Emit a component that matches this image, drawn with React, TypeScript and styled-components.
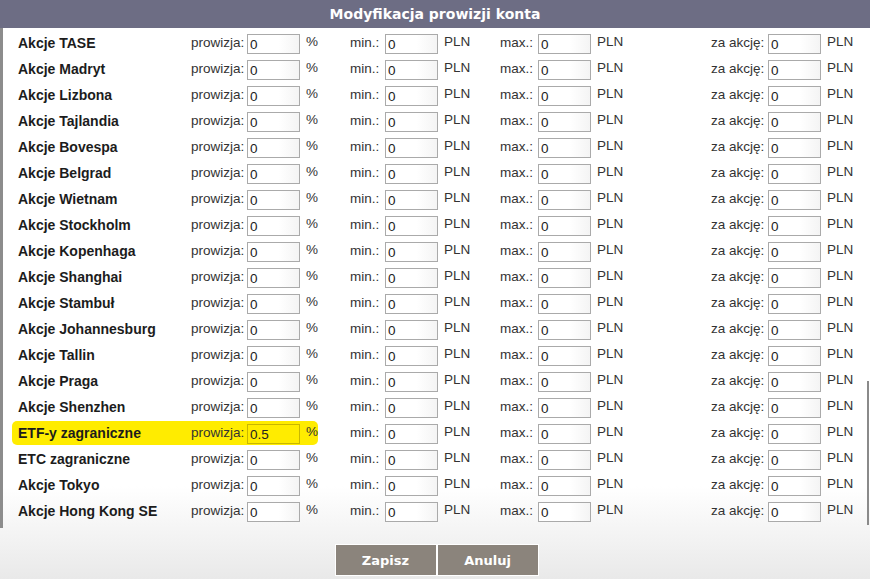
import * as React from 'react';
import styled, { createGlobalStyle } from 'styled-components';

type Entry = {
  name: string,
  rate: string,
  highlighted?: boolean,
};

const ENTRIES: Entry[] = [
  { name: 'Akcje TASE', rate: '0' },
  { name: 'Akcje Madryt', rate: '0' },
  { name: 'Akcje Lizbona', rate: '0' },
  { name: 'Akcje Tajlandia', rate: '0' },
  { name: 'Akcje Bovespa', rate: '0' },
  { name: 'Akcje Belgrad', rate: '0' },
  { name: 'Akcje Wietnam', rate: '0' },
  { name: 'Akcje Stockholm', rate: '0' },
  { name: 'Akcje Kopenhaga', rate: '0' },
  { name: 'Akcje Shanghai', rate: '0' },
  { name: 'Akcje Stambuł', rate: '0' },
  { name: 'Akcje Johannesburg', rate: '0' },
  { name: 'Akcje Tallin', rate: '0' },
  { name: 'Akcje Praga', rate: '0' },
  { name: 'Akcje Shenzhen', rate: '0' },
  { name: 'ETF-y zagraniczne', rate: '0.5', highlighted: true },
  { name: 'ETC zagraniczne', rate: '0' },
  { name: 'Akcje Tokyo', rate: '0' },
  { name: 'Akcje Hong Kong SE', rate: '0' },
];

const ROW_HEIGHT = 26;

const App: React.FC = () => (
  <>
    <GlobalStyle />
    <Dialog>
      <Header>Modyfikacja prowizji konta</Header>
      <Body>
        <List>
          {ENTRIES.map((entry) => (
            <Row key={entry.name}>
              <Highlight active={!!entry.highlighted}>
                <Name>{entry.name}</Name>
                <Caption w={56}>prowizja:</Caption>
                <Field active={!!entry.highlighted} defaultValue={entry.rate} />
                <Unit>%</Unit>
              </Highlight>
              <Group w={150}>
                <Caption w={35}>min.:</Caption>
                <Field active={false} defaultValue="0" />
                <Unit>PLN</Unit>
              </Group>
              <Group w={211}>
                <Caption w={38}>max.:</Caption>
                <Field active={false} defaultValue="0" />
                <Unit>PLN</Unit>
              </Group>
              <Group w={150}>
                <Caption w={57}>za akcję:</Caption>
                <Field active={false} defaultValue="0" />
                <Unit>PLN</Unit>
              </Group>
            </Row>
          ))}
        </List>
        <ScrollThumb />
      </Body>
      <Footer>
        <Button>Zapisz</Button>
        <Button>Anuluj</Button>
      </Footer>
    </Dialog>
  </>
);

const GlobalStyle = createGlobalStyle`
  html, body {
    margin: 0;
    padding: 0;
    overflow: hidden;
  }
  body {
    font-family: "Liberation Sans", Arial, sans-serif;
  }
`;

const Dialog = styled.div`
  display: flex;
  flex-direction: column;
  width: 870px;
  height: 579px;
  background: linear-gradient(to bottom, #ffffff 0%, #ffffff 84%, #f4f4f4 92%, #e9e9e9 100%);
  overflow: hidden;
`;

const Header = styled.div`
  flex: 0 0 28px;
  display: flex;
  align-items: center;
  justify-content: center;
  background-color: #6d6d84;
  color: #ffffff;
  font-family: "DejaVu Sans", Verdana, sans-serif;
  font-weight: bold;
  font-size: 14px;
`;

const Body = styled.div`
  position: relative;
  flex: 1 1 auto;
  border-left: 3px solid #8c8c8c;
  padding-left: 9px;
  padding-top: 1px;
`;

const List = styled.div`
  display: flex;
  flex-direction: column;
`;

const ScrollThumb = styled.div`
  position: absolute;
  right: 1px;
  top: 353px;
  width: 2px;
  height: 144px;
  background-color: #8a8a8a;
`;

const Row = styled.div`
  display: flex;
  align-items: flex-start;
  height: ${ROW_HEIGHT}px;
`;

const Highlight = styled.div<{ active: boolean }>`
  display: flex;
  align-items: flex-start;
  box-sizing: border-box;
  width: 306px;
  height: 24px;
  margin-top: 2px;
  margin-right: 32px;
  padding-left: 6px;
  padding-top: 1px;
  border-radius: 5px;
  background-color: ${(p) => (p.active ? '#ffec00' : 'transparent')};
`;

const Group = styled.div<{ w: number }>`
  display: flex;
  align-items: flex-start;
  width: ${(p) => p.w}px;
  height: 24px;
  margin-top: 3px;
`;

const Name = styled.div`
  width: 173px;
  margin-top: 3px;
  font-size: 14px;
  line-height: 16px;
  font-weight: bold;
  color: #1c1c1c;
  white-space: nowrap;
`;

const Caption = styled.div<{ w: number }>`
  width: ${(p) => p.w}px;
  margin-top: 3px;
  font-size: 13.5px;
  line-height: 16px;
  color: #333333;
  white-space: nowrap;
`;

const Field = styled.input<{ active: boolean }>`
  box-sizing: border-box;
  width: 53px;
  height: 20px;
  margin: 2px 0 0 0;
  padding: 1px 2px 0;
  border: 1px solid ${(p) => (p.active ? '#c9b700' : '#aaaaaa')};
  border-radius: 0;
  background: ${(p) => (p.active ? '#ffec00' : 'linear-gradient(to right, #ffffff 60%, #f4f4f4)')};
  font-family: "Liberation Sans", Arial, sans-serif;
  font-size: 13.5px;
  color: #222222;
  outline: none;
`;

const Unit = styled.div`
  margin-left: 6px;
  margin-top: 2px;
  font-size: 13.5px;
  line-height: 16px;
  color: #333333;
  white-space: nowrap;
`;

const Footer = styled.div`
  flex: 0 0 51px;
  display: flex;
  justify-content: center;
  align-items: flex-start;
  box-sizing: border-box;
  padding-top: 16px;
  padding-left: 3px;
`;

const Button = styled.button`
  width: 102px;
  height: 32px;
  border: 1px solid #ffffff;
  background-color: #8b847c;
  color: #ffffff;
  font-family: "DejaVu Sans", Verdana, sans-serif;
  font-weight: bold;
  font-size: 13px;
  cursor: pointer;
`;

export default App;
